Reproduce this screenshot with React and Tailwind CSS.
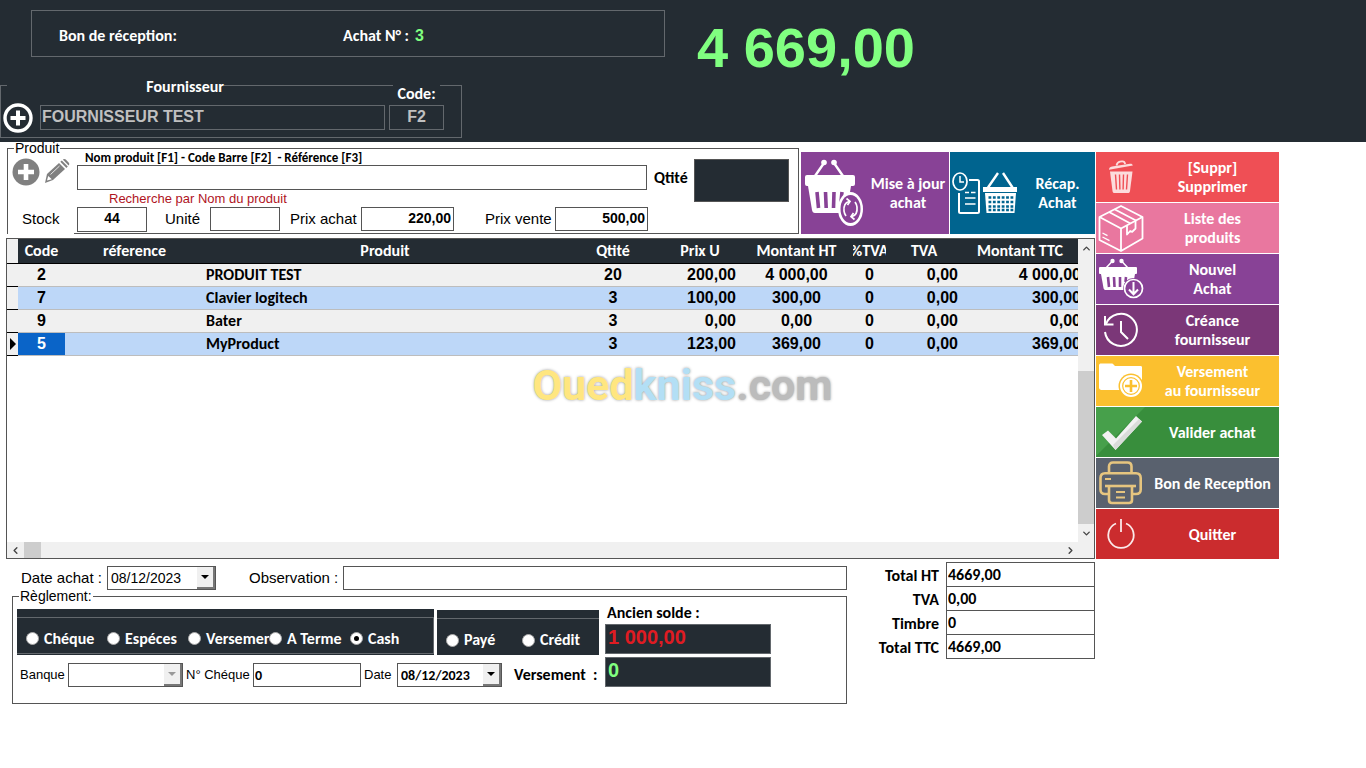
import React, { useState } from 'react';
import { ChevronUp, ChevronDown, ChevronLeft, ChevronRight } from 'lucide-react';

const lines = [
  { code: '2', produit: 'PRODUIT TEST', qte: '20', prix: '200,00', ht: '4 000,00', taux: '0', tva: '0,00', ttc: '4 000,00' },
  { code: '7', produit: 'Clavier logitech', qte: '3', prix: '100,00', ht: '300,00', taux: '0', tva: '0,00', ttc: '300,00' },
  { code: '9', produit: 'Bater', qte: '3', prix: '0,00', ht: '0,00', taux: '0', tva: '0,00', ttc: '0,00' },
  { code: '5', produit: 'MyProduct', qte: '3', prix: '123,00', ht: '369,00', taux: '0', tva: '0,00', ttc: '369,00' },
];

const totals = [
  { id: 'total-ht', label: 'Total HT', value: '4669,00' },
  { id: 'total-tva', label: 'TVA', value: '0,00' },
  { id: 'timbre', label: 'Timbre', value: '0' },
  { id: 'total-ttc', label: 'Total TTC', value: '4669,00' },
];

function PlusRingIcon() {
  return (
    <svg width="30" height="30" viewBox="0 0 30 30" fill="none" stroke="#fff">
      <circle cx="15" cy="15" r="13" strokeWidth="3.4" />
      <path d="M15 7.5v15M7.5 15h15" strokeWidth="4" />
    </svg>
  );
}

function PlusDiscIcon() {
  return (
    <svg width="28" height="28" viewBox="0 0 28 28">
      <circle cx="14" cy="14" r="13.5" fill="#808080" />
      <path d="M14 6v16M6 14h16" stroke="#fff" strokeWidth="4.6" />
    </svg>
  );
}

function PencilIcon() {
  return (
    <svg width="26" height="26" viewBox="0 0 26 26" fill="#808080">
      <path d="M1 25l2-9L15 5l6 6L9 22z" />
      <path d="M3 22.5l1.2-4.6 3.6 3.4z" fill="#fff" />
      <path d="M16.3 3.8l1.5-1.3 6 6-1.4 1.4z" />
      <path d="M18.8 1.6c1-.9 2-.9 3 0l2.8 2.8c.9.9.9 2 0 3z" />
      <path d="M6.5 16.5L15.5 8" stroke="#fff" strokeWidth=".8" />
    </svg>
  );
}

function BasketSyncIcon() {
  return (
    <svg width="60" height="68" viewBox="0 0 60 68">
      <g fill="#fff" stroke="none">
        <circle cx="20" cy="3.5" r="2.8" />
        <circle cx="30" cy="3.5" r="2.8" />
        <rect x="1" y="16" width="50" height="11" rx="2" />
        <path d="M4 27h43l-4 24c-.4 2-1.3 3-3 3H11c-1.8 0-2.6-1-3-3z" />
      </g>
      <path d="M20 4l-9 13M30 4l9 13" stroke="#fff" strokeWidth="2.4" />
      <path d="M13 33l1.5 16M21.5 33l.7 16M30 33l-.5 16M38 33l-1 10" stroke="#884296" strokeWidth="3.6" />
      <ellipse cx="46.5" cy="50" rx="12.5" ry="17" fill="#fff" />
      <ellipse cx="46.5" cy="50" rx="10" ry="14" fill="#884296" />
      <g fill="none" stroke="#fff" strokeWidth="1.7">
        <path d="M45 42.5c-3.500 1-5.500 4.500-5 9.500.2 1.800 1 3.600 2 5M48 57.500c3.500-1 5.500-4.500 5-9.500-.2-1.800-1-3.600-2-5" />
        <path d="M42.500 39.500l3.500 2.800-2.500 3.700M50.500 60.500L47 57.700l2.500-3.700" />
      </g>
    </svg>
  );
}

function RecapIcon() {
  return (
    <svg width="66" height="43" viewBox="0 0 66 43" fill="none" stroke="#fff">
      <ellipse cx="8" cy="9.5" rx="7" ry="8.5" strokeWidth="1.7" />
      <path d="M8 4v6h4" strokeWidth="1.5" />
      <path d="M17 8h8.500c1 0 1.500.5 1.500 1.500v30c0 1-.5 1.500-1.500 1.500h-17C7.500 41 7 40.500 7 39.500V21" strokeWidth="2" />
      <path d="M13 20.500h4M19 20.500h4.500M13 26h10.500M13 32h10.500" strokeWidth="1.5" />
      <path d="M46 1L36 15.500M51 1l9.500 14.500" strokeWidth="2.4" />
      <path d="M31 15h34v5H31z" fill="#fff" stroke="none" />
      <path d="M33 21h31l-1.500 20h-28z" fill="#fff" stroke="none" />
      <path d="M36.500 25.500h25M36.500 30h25M36.500 34.500h25M36.500 38h25" stroke="#00648f" strokeWidth="2.4" strokeDasharray="2.8 1.6" />
    </svg>
  );
}

function TrashIcon() {
  return (
    <svg width="26" height="34" viewBox="0 0 26 34">
      <path d="M1 9.800C1 7.800 2 7 4 6.600L22 3.800c1.600-.2 2.500.3 2.800 1.800z" fill="#fcdcdc" />
      <path d="M8.500 5.500C9 3 10 2 12 1.700l2-.3c1.800-.2 2.800.6 3.200 2.600" fill="none" stroke="#fcdcdc" strokeWidth="1.8" />
      <path d="M2 11.500h22.500L22 31c-.2 1.400-.8 2-2 2H6.500c-1.200 0-1.800-.6-2-2z" fill="#fcdcdc" />
      <path d="M7.500 14.500l1 15M11.500 14.500l.4 15M15.500 14.500l-.4 15M19.500 14.500l-1 15" stroke="#ef4f55" strokeWidth="1.4" />
    </svg>
  );
}

function BoxIcon() {
  return (
    <svg width="46" height="47" viewBox="0 0 46 47" fill="none" stroke="#fff" strokeWidth="1.8" strokeLinejoin="round">
      <path d="M23 1l21.500 11v21.500L23 46 1.500 35V12z" />
      <path d="M1.500 12L23 23.500 44.500 12M23 23.500V46" />
      <path d="M11 7l21.500 11.500M16.500 4.200l21.500 11.300" />
      <path d="M29 20.500v9l3.200-3.500 2 .8 3.300-3.300v-7.500" />
      <path d="M4.500 28l5 2.600M4.500 32l7 3.600" strokeWidth="1.4" />
    </svg>
  );
}

function BasketDownIcon() {
  return (
    <svg width="46" height="42" viewBox="0 0 46 42">
      <g fill="#fff">
        <circle cx="14.5" cy="3" r="2.2" />
        <circle cx="23.5" cy="3" r="2.2" />
        <rect x="1" y="9" width="38" height="7" rx="1" />
        <path d="M3 16h34l-2.500 14c-.3 1.500-1 2-2.500 2H8c-1.500 0-2.200-.6-2.500-2z" />
      </g>
      <path d="M14.500 3L8 10M23.500 3l6.500 7" stroke="#fff" strokeWidth="1.5" />
      <path d="M10 19l1 10M16 19l.5 10M22 19v10M28 19l-.5 5" stroke="#884296" strokeWidth="2.6" />
      <circle cx="35.5" cy="30.5" r="10.5" fill="#884296" />
      <circle cx="35.5" cy="30.5" r="9" fill="none" stroke="#fff" strokeWidth="1.7" />
      <path d="M35.500 24v12M31 31.500l4.500 4.700 4.500-4.700" fill="none" stroke="#fff" strokeWidth="2" />
    </svg>
  );
}

function HistoryIcon() {
  return (
    <svg width="36" height="36" viewBox="0 0 36 36" fill="none" stroke="#fff" strokeWidth="2">
      <path d="M3 12A16 16 0 1 1 2 20" />
      <path d="M2 4v8.500h8.500" />
      <path d="M18 9v11l7 7" />
    </svg>
  );
}

function FolderPlusIcon() {
  return (
    <svg width="44" height="36" viewBox="0 0 44 36">
      <path d="M0 2.500C0 1 1 .5 2 .5h10.500c1 0 1.500.4 2 1L16 3h25.500c1 0 1.500.5 1.500 1.500V25c0 1-.5 2-1.500 2h-39C1 27 0 26 0 24.500z" fill="#fff" />
      <circle cx="32" cy="23" r="12.5" fill="#fbc02f" />
      <circle cx="32" cy="23" r="11" fill="#fff" />
      <circle cx="32" cy="23" r="8.3" fill="none" stroke="#fbc02f" strokeWidth="1.2" />
      <path d="M32 17v12M26 23h12" stroke="#fbc02f" strokeWidth="2.6" />
    </svg>
  );
}

function CheckIcon() {
  return (
    <svg width="50" height="50" viewBox="0 0 50 50">
      <path d="M0 0h49L0 49z" fill="#47a04b" />
      <path d="M6 28l6-4.500 8 8L40 9l6 5.500L19.500 43z" fill="#f2f2f2" />
      <path d="M19.500 43L46 14.500 43 12 17 38z" fill="#d9dcd9" />
    </svg>
  );
}

function PrinterIcon() {
  return (
    <svg width="44" height="44" viewBox="0 0 44 44" fill="none" stroke="#e6c57f" strokeWidth="2.6" strokeLinejoin="round">
      <path d="M10 12V5.500C10 3 11.500 1.500 14 1.500h14.500c2.500 0 4 1.500 4 4V12" />
      <path d="M10 33H6c-3 0-4.500-1.500-4.500-4.500V17c0-3 1.500-4.800 4.500-4.800h31c3 0 4.700 1.800 4.700 4.800v11.500c0 3-1.700 4.500-4.700 4.500h-4" />
      <path d="M6 25h31" />
      <path d="M10 25v14c0 2 1 3 3 3h17c2 0 3-1 3-3V25" />
      <path d="M6 18h6M17 31h9M17 36.500h9" strokeWidth="2" />
    </svg>
  );
}

function PowerIcon() {
  return (
    <svg width="30" height="32" viewBox="0 0 30 32" fill="none" stroke="#fbe9e9" strokeWidth="1.8">
      <path d="M10 5.500a12.700 12.700 0 1 0 10 0" />
      <path d="M15 1v13" />
    </svg>
  );
}

function ActionButton({ icon, className, children }) {
  return (
    <button className={`flex h-[50px] w-full items-center text-white ${className}`}>
      <span className="flex h-full w-[50px] shrink-0 items-center justify-center">{icon}</span>
      <span className="flex-1 text-center text-base leading-[19px] font-bold whitespace-nowrap">{children}</span>
    </button>
  );
}

function Combo({ id, value, className, disabled, textClass }) {
  return (
    <div className={`flex h-6 border border-[#555] bg-white ${className}`}>
      <select id={id} disabled={disabled} defaultValue={value} className={`min-w-0 flex-1 appearance-none pl-[3px] text-black outline-none ${textClass}`}>
        <option>{value}</option>
      </select>
      <span className="pointer-events-none flex w-[18px] items-center justify-center border-r-2 border-b-2 border-[#777] bg-[#f0f0f0]">
        <svg width="8" height="4" viewBox="0 0 8 4">
          <path d="M0 0h8L4 4z" fill={disabled ? '#999' : '#000'} />
        </svg>
      </span>
    </div>
  );
}

function Radio({ name, label, checked, onChange, className }) {
  return (
    <label className={`flex shrink-0 items-center gap-[5px] overflow-hidden text-base leading-5 font-bold whitespace-nowrap text-white ${className}`}>
      <input
        type="radio"
        name={name}
        checked={checked}
        onChange={onChange}
        className="m-0 flex size-[13px] shrink-0 appearance-none items-center justify-center rounded-full border border-[#aaa] bg-white checked:before:size-[5px] checked:before:rounded-full checked:before:bg-black"
      />
      {label}
    </label>
  );
}

function Header() {
  return (
    <header className="flex items-start gap-8 bg-[#242c33] pt-[10px] pb-1 text-white">
      <div className="w-[665px] shrink-0">
        <div className="ml-[31px] flex h-[47px] items-center border border-[#63686d] pt-1 pl-[27px] text-base font-bold">
          <span className="w-[284px]">Bon de réception:</span>
          <span>Achat N° :</span>
          <span className="ml-[6px] font-['Liberation_Sans',sans-serif] text-base text-[#80ff80]">3</span>
        </div>
        <fieldset className="mt-5 w-[462px] border border-[#63686d]">
          <legend className="ml-[6px] h-4 w-[217px]">
            <label htmlFor="fournisseur" className="block text-right text-base leading-5 font-bold">Fournisseur</label>
          </legend>
          <div className="flex items-end pb-[7px] pl-[2px]">
            <button aria-label="Ajouter un fournisseur" className="-mb-[3px]"><PlusRingIcon /></button>
            <input
              id="fournisseur"
              readOnly
              value="FOURNISSEUR TEST"
              className="ml-[7px] h-[25px] w-[345px] border border-[#63686d] bg-transparent pb-[2px] pl-px font-['Liberation_Sans',sans-serif] text-base font-bold text-[#c0c0c0] outline-none"
            />
            <div className="-mt-2 ml-1 flex w-[55px] flex-col">
              <label htmlFor="code-fournisseur" className="mx-1 bg-[#242c33] pb-[2px] text-center text-base leading-[18px] font-bold">Code:</label>
              <input
                id="code-fournisseur"
                readOnly
                value="F2"
                className="h-[25px] w-full border border-[#63686d] bg-transparent pb-[2px] text-center font-['Liberation_Sans',sans-serif] text-base font-bold text-[#c0c0c0] outline-none"
              />
            </div>
          </div>
        </fieldset>
      </div>
      <output className="pt-[6px] font-['Liberation_Sans',sans-serif] text-[56px] leading-[64px] font-bold whitespace-nowrap text-[#80ff80]">4 669,00</output>
    </header>
  );
}

function ProductForm() {
  return (
    <fieldset className="ml-px min-w-0 flex-1 border border-[#555] font-['Liberation_Sans',sans-serif]">
      <legend className="ml-[6px] h-3 px-px text-[14px] leading-3">Produit</legend>
      <div className="flex">
        <div className="flex w-[69px] shrink-0 items-start gap-1 pt-1 pl-1">
          <button aria-label="Nouveau produit"><PlusDiscIcon /></button>
          <button aria-label="Modifier le produit"><PencilIcon /></button>
        </div>
        <div className="flex min-w-0 flex-1 flex-col">
          <label htmlFor="nom-produit" className="h-[11px] pl-2 font-[Carlito,Lato,sans-serif] text-[13px] leading-[8px] font-bold whitespace-pre">Nom produit [F1] - Code Barre [F2]  - Référence [F3]</label>
          <input id="nom-produit" className="h-[25px] w-full border border-[#555] px-1 text-[14px] outline-none" />
          <span className="pl-8 text-[13px] leading-[17px] text-[#b0141e]">Recherche par Nom du produit</span>
        </div>
        <label htmlFor="qtite" className="w-[47px] pt-[14px] pl-[7px] font-[Carlito,Lato,sans-serif] text-base leading-5 font-bold">Qtité</label>
        <input id="qtite" className="mt-[5px] mr-[9px] h-[43px] w-[95px] border border-[#555] bg-[#242c33] px-1 text-right text-xl font-bold text-white outline-none" />
      </div>
      <div className="flex pb-px text-[15px] leading-6">
        <label htmlFor="stock" className="-mb-1 w-[66px] bg-white pl-[14px]">Stock</label>
        <input id="stock" defaultValue="44" className="ml-[3px] h-[25px] w-[70px] border border-[#555] pb-[3px] text-center text-[14px] font-bold outline-none" />
        <label htmlFor="unite" className="w-[63px] pl-[18px]">Unité</label>
        <input id="unite" className="h-6 w-[70px] border border-[#555] pb-[3px] text-center text-[14px] font-bold outline-none" />
        <label htmlFor="prix-achat" className="w-[81px] pl-[10px]">Prix achat</label>
        <input id="prix-achat" defaultValue="220,00" className="h-6 w-[93px] border border-[#555] pr-[2px] pb-[3px] text-right text-[14px] font-bold outline-none" />
        <label htmlFor="prix-vente" className="w-[101px] pl-[31px]">Prix vente</label>
        <input id="prix-vente" defaultValue="500,00" className="h-6 w-[93px] border border-[#555] pr-[2px] pb-[3px] text-right text-[14px] font-bold outline-none" />
      </div>
    </fieldset>
  );
}

function LinesTable() {
  const [selected, setSelected] = useState('5');

  return (
    <div className="relative mt-1 flex flex-1 flex-col border border-[#555] bg-white">
      <div className="flex flex-1">
        <div className="min-w-0 flex-1 overflow-hidden">
          <table className="w-[calc(100%+7px)] table-fixed border-collapse">
            <colgroup>
              <col className="w-[11px]" />
              <col className="w-[47px]" />
              <col className="w-[139px]" />
              <col />
              <col className="w-[94px]" />
              <col className="w-[80px]" />
              <col className="w-[113px]" />
              <col className="w-[33px]" />
              <col className="w-[76px]" />
              <col className="w-[123px]" />
            </colgroup>
            <thead>
              <tr className="h-6 border-b border-black bg-[#242c33] text-base leading-5 text-white">
                <th className="bg-[#f0f0f0]"></th>
                <th>Code</th>
                <th>réference</th>
                <th>Produit</th>
                <th>Qtité</th>
                <th>Prix U</th>
                <th className="whitespace-nowrap">Montant HT</th>
                <th className="overflow-hidden text-clip whitespace-nowrap">
                  <div className="flex justify-center">%TVA</div>
                </th>
                <th>TVA</th>
                <th className="pr-[7px] whitespace-nowrap">Montant TTC</th>
              </tr>
            </thead>
            <tbody className="font-['Liberation_Sans',sans-serif] text-base leading-5 font-bold">
              {lines.map((line) => (
                <tr key={line.code} onClick={() => setSelected(line.code)} className="h-[23px] border-b border-[#bdbdbd] bg-[#f0f0f0] even:bg-[#bdd7f8]">
                  <td className="border-b border-black bg-[#f0f0f0]">
                    {selected === line.code && (
                      <svg width="7" height="12" viewBox="0 0 7 12" className="ml-[3px]">
                        <path d="M0 0l6 6-6 6z" />
                      </svg>
                    )}
                  </td>
                  <td className={selected === line.code ? 'bg-[#0a64c8] text-center text-white' : 'text-center'}>{line.code}</td>
                  <td></td>
                  <td className="pl-[2px] font-[Carlito,Lato,sans-serif]">{line.produit}</td>
                  <td className="text-center">{line.qte}</td>
                  <td className="pr-1 text-right">{line.prix}</td>
                  <td className="text-center">{line.ht}</td>
                  <td className="text-center">{line.taux}</td>
                  <td className="pr-1 text-right">{line.tva}</td>
                  <td className="pr-1 text-right">{line.ttc}</td>
                </tr>
              ))}
            </tbody>
          </table>
        </div>
        <div className="flex w-4 flex-col items-center bg-[#f0f0f0] text-[#444]">
          <button aria-label="Monter" className="flex h-[18px] items-center"><ChevronUp size={11} strokeWidth={3} /></button>
          <div className="flex-1" />
          <div className="h-[153px] w-full bg-[#cdcdcd]" />
          <button aria-label="Descendre" className="flex h-[18px] items-center"><ChevronDown size={11} strokeWidth={3} /></button>
        </div>
      </div>
      <div className="flex h-4 items-center bg-[#f0f0f0] text-[#444]">
        <button aria-label="Gauche" className="flex w-[17px] justify-center"><ChevronLeft size={11} strokeWidth={3} /></button>
        <div className="h-full w-[17px] bg-[#cdcdcd]" />
        <div className="flex-1" />
        <button aria-label="Droite" className="mr-4 flex w-4 justify-center"><ChevronRight size={11} strokeWidth={3} /></button>
      </div>
      <div className="pointer-events-none absolute inset-x-0 top-[120px] pl-[264px] text-center font-[Roboto,sans-serif] text-[43px] leading-[52px] font-bold [text-shadow:0_0_3px_#999]">
        <span className="text-[#ffe680]">Oued</span>
        <span className="text-[#b3dff5]">kniss</span>
        <span className="text-[#bcbcbc]">.com</span>
      </div>
    </div>
  );
}

function Payment() {
  const [mode, setMode] = useState('Cash');
  const [status, setStatus] = useState('');

  return (
    <fieldset className="ml-[6px] border border-[#555] pb-4 font-['Liberation_Sans',sans-serif]">
      <legend className="ml-[6px] h-3 px-px text-[14px] leading-3">Règlement:</legend>
      <div className="flex pt-px pl-1">
        <div className="w-[588px] shrink-0">
          <div className="flex gap-[3px] pt-[6px] font-[Carlito,Lato,sans-serif]">
            <div className="w-[417px] bg-[#242c33] pt-2">
              <div className="flex h-[37px] border border-l-0 border-[#63686d] pt-[6px] pl-[9px]">
                {['Chéque', 'Espéces', 'Versement', 'A Terme', 'Cash'].map((m) => (
                  <Radio key={m} name="mode" label={m} checked={mode === m} onChange={() => setMode(m)} className="w-[81px]" />
                ))}
              </div>
            </div>
            <div className="mt-px w-[162px] bg-[#242c33] pt-2">
              <div className="flex h-[37px] border-t border-[#63686d] pt-[6px] pl-[9px]">
                {['Payé', 'Crédit'].map((s) => (
                  <Radio key={s} name="statut" label={s} checked={status === s} onChange={() => setStatus(s)} className="w-[76px]" />
                ))}
              </div>
            </div>
          </div>
          <div className="flex items-center pt-2 text-[13px]">
            <label htmlFor="banque" className="w-[51px] pl-[3px]">Banque</label>
            <Combo id="banque" value="" disabled className="w-[115px]" textClass="text-[13px]" />
            <label htmlFor="num-cheque" className="w-[70px] pl-[3px] whitespace-nowrap">N° Chéque</label>
            <input id="num-cheque" defaultValue="0" className="h-6 w-[108px] border border-[#555] pl-px font-[Carlito,Lato,sans-serif] text-[14px] font-bold outline-none" />
            <label htmlFor="date-cheque" className="w-9 pl-[3px]">Date</label>
            <Combo id="date-cheque" value="08/12/2023" className="w-[105px]" textClass="font-[Carlito,Lato,sans-serif] text-[14px] font-bold" />
            <label htmlFor="versement" className="flex-1 pl-3 font-[Carlito,Lato,sans-serif] text-base leading-5 font-bold whitespace-pre">Versement  :</label>
          </div>
        </div>
        <div className="w-[166px]">
          <label htmlFor="ancien-solde" className="block h-[21px] pl-[2px] font-[Carlito,Lato,sans-serif] text-base leading-5 font-bold">Ancien solde :</label>
          <input id="ancien-solde" readOnly value="1 000,00" className="block h-[30px] w-full border border-[#63686d] bg-[#242c33] pb-[3px] pl-[2px] text-xl font-bold text-[#e01b22] outline-none" />
          <input id="versement" defaultValue="0" className="mt-[3px] block h-[30px] w-full border border-[#63686d] bg-[#242c33] pb-[3px] pl-[2px] text-xl font-bold text-[#80ff80] outline-none" />
        </div>
      </div>
    </fieldset>
  );
}

export default function App() {
  return (
    <div className="min-h-screen bg-white font-[Carlito,Lato,sans-serif] text-black">
      <Header />
      <main className="pr-[87px] pl-[6px]">
        <div className="flex gap-px">
          <div className="flex min-w-0 flex-1 flex-col">
            <div className="flex items-end">
              <ProductForm />
              <button className="ml-[2px] flex h-[82px] w-[148px] items-center bg-[#884296] text-white">
                <span className="flex w-[66px] shrink-0 justify-center"><BasketSyncIcon /></span>
                <span className="flex-1 text-base leading-[19px] font-bold whitespace-nowrap">Mise à jour<br />achat</span>
              </button>
              <button className="ml-px flex h-[82px] w-[145px] items-center bg-[#00648f] text-white">
                <span className="flex w-[70px] shrink-0 justify-center"><RecapIcon /></span>
                <span className="flex-1 text-base leading-[19px] font-bold">Récap.<br />Achat</span>
              </button>
            </div>
            <LinesTable />
          </div>
          <nav className="flex w-[183px] shrink-0 flex-col gap-px pt-[10px]">
            <ActionButton icon={<TrashIcon />} className="bg-[#ef4f55]">[Suppr]<br />Supprimer</ActionButton>
            <ActionButton icon={<BoxIcon />} className="bg-[#e9779f]">Liste des<br />produits</ActionButton>
            <ActionButton icon={<BasketDownIcon />} className="bg-[#884296]">Nouvel<br />Achat</ActionButton>
            <ActionButton icon={<HistoryIcon />} className="bg-[#7b3778]">Créance<br />fournisseur</ActionButton>
            <ActionButton icon={<FolderPlusIcon />} className="bg-[#fbc02f]">Versement<br />au fournisseur</ActionButton>
            <ActionButton icon={<CheckIcon />} className="bg-[#388e3c]">Valider achat</ActionButton>
            <ActionButton icon={<PrinterIcon />} className="bg-[#59616e]">Bon de Reception</ActionButton>
            <ActionButton icon={<PowerIcon />} className="bg-[#cb2c2e]">Quitter</ActionButton>
          </nav>
        </div>

        <div className="flex pt-[3px] pr-[184px]">
          <div className="min-w-0 flex-1">
            <div className="flex items-center pt-1 pl-[15px] font-['Liberation_Sans',sans-serif] text-[15px]">
              <label htmlFor="date-achat" className="w-[86px]">Date achat :</label>
              <Combo id="date-achat" value="08/12/2023" className="w-[109px]" textClass="text-[14px]" />
              <label htmlFor="observation" className="w-[127px] pl-[33px] whitespace-nowrap">Observation :</label>
              <input id="observation" className="h-6 min-w-0 flex-1 border border-[#555] px-1 text-[14px] outline-none" />
            </div>
            <Payment />
          </div>
          <div className="flex w-[248px] shrink-0 flex-col text-base font-bold">
            {totals.map((t) => (
              <div key={t.id} className="flex h-6 items-center">
                <label htmlFor={t.id} className="flex-1 pt-1 pr-[7px] text-right leading-5">{t.label}</label>
                <input id={t.id} readOnly value={t.value} className="-mb-px h-[25px] w-[149px] border border-[#555] pl-px outline-none" />
              </div>
            ))}
          </div>
        </div>
      </main>
    </div>
  );
}
